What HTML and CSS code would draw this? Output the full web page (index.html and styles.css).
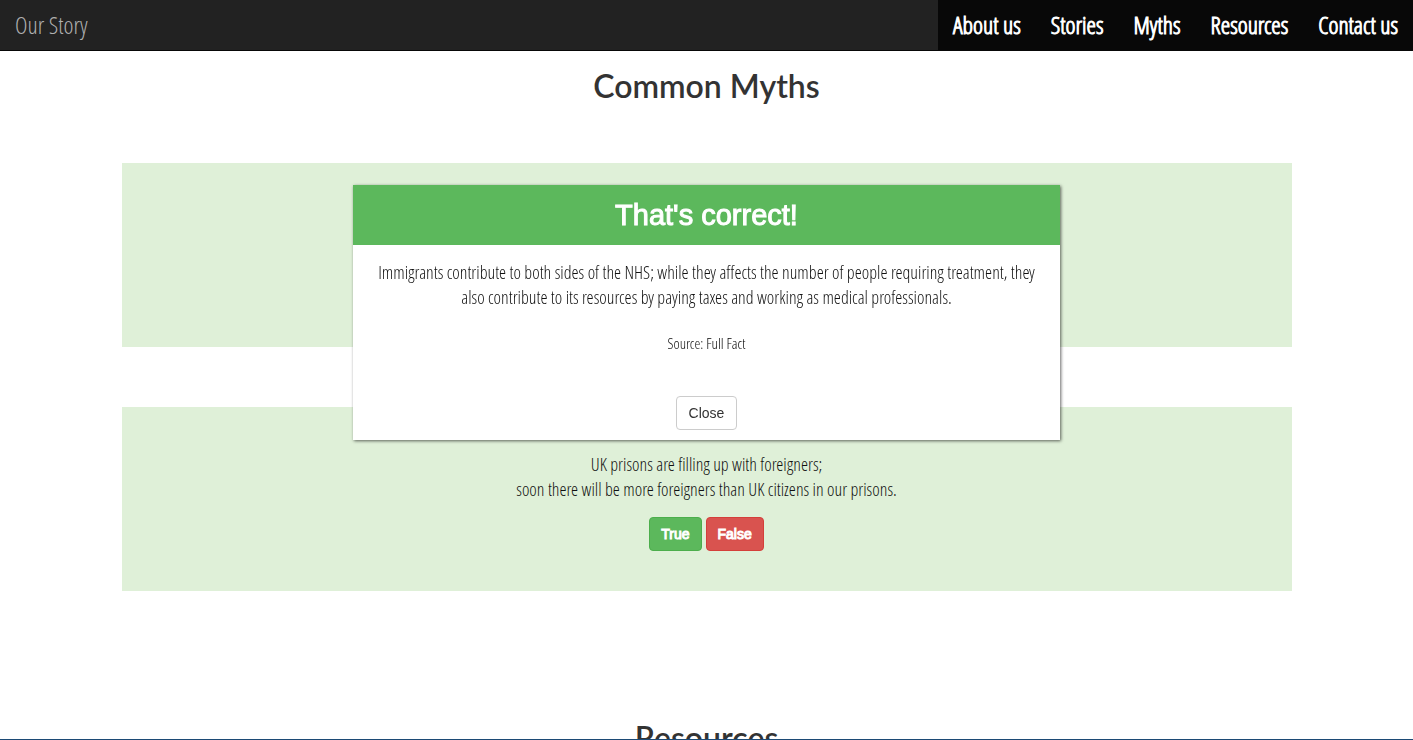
FILE: index.html
```html
<!DOCTYPE html>
<html lang="en">
<head>
<meta charset="utf-8">
<title>Our Story</title>
<link rel="stylesheet" href="styles.css">
</head>
<body>
<nav class="navbar">
  <a class="brand" href="#home">Our Story</a>
  <ul class="nav-links">
    <li><a href="#about">About us</a></li>
    <li><a href="#stories">Stories</a></li>
    <li><a href="#myths">Myths</a></li>
    <li><a href="#resources">Resources</a></li>
    <li><a href="#contact">Contact us</a></li>
  </ul>
</nav>
<main>
  <section class="section" id="myths">
    <h2 class="section-title">Common Myths</h2>
    <div class="myths">
      <article class="myth"></article>
      <article class="myth">
        <p class="myth-text">UK prisons are filling up with foreigners;<br>soon there will be more foreigners than UK citizens in our prisons.</p>
        <div class="answers">
          <button class="btn btn-true" type="button">True</button>
          <button class="btn btn-false" type="button">False</button>
        </div>
      </article>
    </div>
  </section>
  <section class="section" id="resources">
    <h2 class="section-title">Resources</h2>
  </section>
</main>
<div class="dialog" role="dialog" aria-labelledby="dialog-title">
  <h3 class="dialog-title" id="dialog-title">That's correct!</h3>
  <div class="dialog-body">
    <p class="dialog-text">Immigrants contribute to both sides of the NHS; while they affects the number of people requiring treatment, they also contribute to its resources by paying taxes and working as medical professionals.</p>
    <p class="source">Source: <a href="#full-fact">Full Fact</a></p>
    <button class="btn btn-close" type="button">Close</button>
  </div>
</div>
<div class="window-edge"></div>
</body>
</html>
```
FILE: styles.css
```css
* { box-sizing: border-box; }
html, body { height: 100%; }
body {
  margin: 0;
  overflow: hidden;
  background: #fff;
  color: #111;
  font-family: "Open Sans Condensed Light", "Liberation Sans Narrow", "Liberation Sans", sans-serif;
  font-size: 18px;
  font-weight: 300;
  line-height: 25px;
}
p, h2, h3, ul { margin: 0; }
a { color: inherit; text-decoration: none; }

.navbar {
  display: flex;
  justify-content: space-between;
  background: #222;
  border-bottom: 1px solid #080808;
  font-size: 24px;
  line-height: 50px;
}
.brand { padding: 0 15px; color: #b0b0b0; }
.nav-links {
  display: flex;
  padding: 0;
  list-style: none;
  background: #080808;
  color: #fff;
}
.nav-links a {
  display: block;
  padding: 0 15px;
  -webkit-text-stroke: 1px #fff;
}

.section { padding: 15px 15px 112px; }
.section-title {
  color: #333;
  font-family: Lato, sans-serif;
  font-size: 32px;
  font-weight: 600;
  line-height: 40px;
  text-align: center;
}
.myths {
  display: flex;
  flex-direction: column;
  gap: 60px;
  max-width: 1170px;
  margin: 57px auto 0;
}
.myth {
  min-height: 184px;
  padding: 45px 15px 40px;
  background: #dff0d8;
  text-align: center;
}
.answers {
  display: flex;
  justify-content: center;
  gap: 4px;
  margin-top: 15px;
}

.btn {
  padding: 6px 12px;
  border: 1px solid;
  border-radius: 4px;
  font-family: "Liberation Sans", Arial, sans-serif;
  font-size: 14px;
  line-height: 20px;
}
.btn-true,
.btn-false {
  padding: 6px 11px;
  color: #fff;
  -webkit-text-stroke: 1px #fff;
}
.btn-true { background: #5cb85c; border-color: #4cae4c; }
.btn-false { background: #d9534f; border-color: #d43f3a; }
.btn-close { background: #fff; border-color: #ccc; color: #333; }

.dialog {
  position: fixed;
  top: 25%;
  left: 25%;
  width: 50%;
  background: #fff;
  box-shadow: 1px 1px 3px rgba(0, 0, 0, 0.6);
  text-align: center;
}
.dialog-title {
  background: #5cb85c;
  color: #fff;
  font-family: "Liberation Sans", Arial, sans-serif;
  font-size: 29px;
  font-weight: 400;
  line-height: 60px;
  -webkit-text-stroke: 1px #fff;
}
.dialog-body { padding: 15px 15px 10px; }
.source { margin: 21px 0 40px; font-size: 15px; }
.source a { color: #000; }

.window-edge {
  position: fixed;
  inset: auto 0 0;
  height: 1px;
  background: #1c4a75;
}
```
